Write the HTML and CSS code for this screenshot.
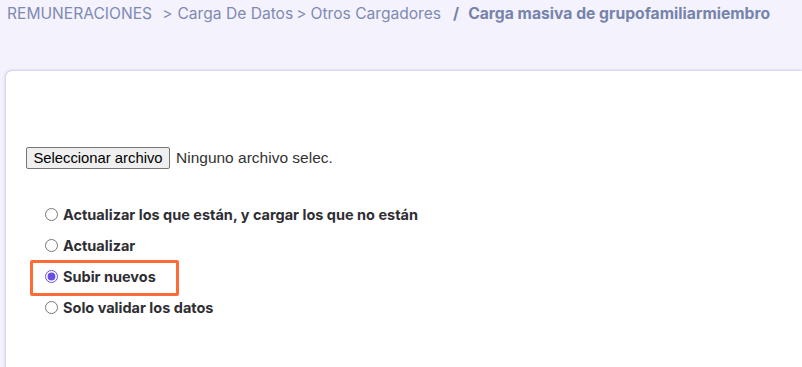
FILE: index.html
```html
<!DOCTYPE html>
<html lang="es">
<head>
<meta charset="utf-8">
<title>Carga masiva</title>
<link rel="stylesheet" href="styles.css">
</head>
<body>
<nav class="crumbs">
  <span class="crumb">REMUNERACIONES</span>
  <span class="sep">&gt;</span>
  <span class="crumb">Carga De Datos</span>
  <span class="sep tight">&gt;</span>
  <span class="crumb">Otros Cargadores</span>
  <span class="current"><span class="slash">/</span>Carga masiva de grupofamiliarmiembro</span>
</nav>
<main class="card">
  <div class="file-row">
    <span class="file-btn">Seleccionar archivo</span>
    <span class="file-name">Ninguno archivo selec.</span>
  </div>
  <div class="options">
    <label class="option"><input type="radio" name="modo"><span>Actualizar los que están, y cargar los que no están</span></label>
    <label class="option"><input type="radio" name="modo"><span>Actualizar</span></label>
    <label class="option highlighted"><input type="radio" name="modo" checked><span>Subir nuevos</span></label>
    <label class="option"><input type="radio" name="modo"><span>Solo validar los datos</span></label>
  </div>
</main>
</body>
</html>
```
FILE: styles.css
```css
html, body {
  margin: 0;
  padding: 0;
  background: #f4f2fd;
  height: 100%;
  overflow: hidden;
}
body {
  font-family: Inter, "Liberation Sans", sans-serif;
}
.crumbs {
  display: flex;
  align-items: baseline;
  padding: 4px 0 0 7px;
  height: 65px;
  box-sizing: border-box;
  font-size: 15.6px;
  color: #7e8ab2;
  white-space: nowrap;
}
.sep {
  margin: 0 5px 0 10px;
}
.sep.tight {
  margin: 0 4px 0 3px;
}
.current {
  font-weight: 700;
  font-size: 15.7px;
  color: #7683ab;
  margin-left: 12px;
}
.slash {
  margin-right: 9px;
}
.card {
  margin: 6px 0 0 6px;
  background: #fff;
  border-top-left-radius: 6px;
  box-shadow: -1px 0 3px rgba(150, 140, 210, 0.35), 0 -1px 2px rgba(150, 140, 210, 0.25);
  height: 400px;
  padding: 76px 0 0 20px;
  box-sizing: border-box;
}
.file-row {
  display: flex;
  align-items: center;
  font-family: "Liberation Sans", Arial, sans-serif;
  font-size: 15.5px;
  color: #222;
}
.file-btn {
  display: inline-block;
  height: 22px;
  line-height: 20px;
  box-sizing: border-box;
  width: 144px;
  font-size: 14.8px;
  text-align: center;
  border: 1px solid #767676;
  border-radius: 2px;
  background: #efefef;
  color: #000;
}
.file-name {
  margin-left: 6px;
  color: #333;
}
.options {
  margin-top: 30px;
  padding-left: 19px;
}
.option {
  display: flex;
  align-items: center;
  height: 31px;
  font-size: 14.5px;
  font-weight: 700;
  color: #2e2e33;
  position: relative;
  width: max-content;
}
.option input {
  margin: 0 5px 0 0;
  width: 13px;
  height: 13px;
  accent-color: #6a4ee6;
}
.option.highlighted::before {
  content: "";
  position: absolute;
  left: -15px;
  top: -1px;
  width: 143px;
  height: 30px;
  border: 3px solid #ff6b35;
  border-radius: 2px;
}
```
